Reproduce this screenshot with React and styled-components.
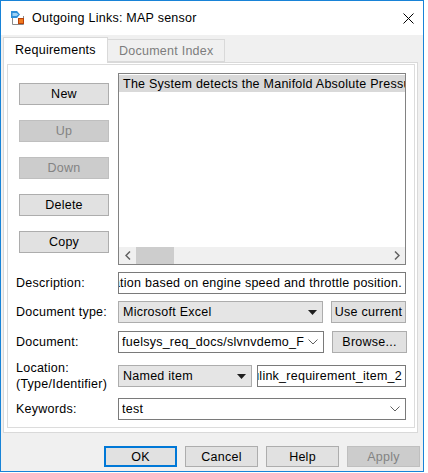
import styled, { createGlobalStyle } from 'styled-components'

const GlobalStyle = createGlobalStyle`
  body {
    margin: 0;
    background: #ffffff;
    font-family: "Liberation Sans", Arial, sans-serif;
    font-size: 12.5px;
    letter-spacing: 0.25px;
    color: #000;
  }
`

const Window = styled.div`
  width: 424px;
  box-sizing: border-box;
  border: 1px solid #1883d7;
  background: #f0f0f0;
  display: flex;
  flex-direction: column;
`

const TitleBar = styled.div`
  height: 34px;
  background: #ffffff;
  display: flex;
  align-items: center;
  padding-left: 10px;
  padding-right: 9px;
`

const TitleText = styled.span`
  margin-left: 7px;
`

const CloseBtn = styled.div`
  margin-left: auto;
  width: 11px;
  height: 11px;
  display: flex;
`

const Body = styled.div`
  padding: 2px 5px 0 2px;
`

const TabRow = styled.div`
  display: flex;
  align-items: flex-end;
  height: 26px;
  margin-bottom: -1px;
`

const Tab = styled.div`
  box-sizing: border-box;
  position: relative;
  z-index: ${p => (p.$active ? 1 : 0)};
  height: ${p => (p.$active ? '26px' : '23px')};
  margin-bottom: ${p => (p.$active ? '0' : '1px')};
  width: ${p => p.$w}px;
  border: 1px solid #d9d9d9;
  border-bottom: ${p => (p.$active ? 'none' : '1px solid #d9d9d9')};
  border-left: ${p => (p.$active ? '1px solid #d9d9d9' : 'none')};
  background: ${p => (p.$active ? '#ffffff' : '#f0f0f0')};
  color: ${p => (p.$active ? '#000' : '#7d7d7d')};
  padding-left: 11px;
  display: flex;
  align-items: center;
  white-space: nowrap;
  padding-bottom: ${p => (p.$active ? '2px' : '0')};
`

const Pane = styled.div`
  box-sizing: border-box;
  width: 415px;
  border: 1px solid #d9d9d9;
  background: #ffffff;
  padding: 1px 2px 4px 3px;
`

const Inner = styled.div`
  box-sizing: border-box;
  height: 364px;
  border: 1px solid #dcdcdc;
  padding: 8px 7px 0 0;
`

const Top = styled.div`
  display: flex;
`

const ButtonCol = styled.div`
  display: flex;
  flex-direction: column;
  gap: 15px;
  width: 90px;
  margin-left: 11px;
  padding-top: 10px;
`

const Btn = styled.div`
  box-sizing: border-box;
  width: ${p => (p.$w ? `${p.$w}px` : '100%')};
  height: ${p => p.$h || 22}px;
  border: ${p => (p.$default ? '2px solid #0078d7' : p.$disabled ? '1px solid #bfbfbf' : '1px solid #adadad')};
  background: ${p => (p.$disabled ? '#cccccc' : '#e1e1e1')};
  color: ${p => (p.$disabled ? '#838383' : '#000')};
  display: flex;
  align-items: center;
  justify-content: center;
  flex-shrink: 0;
  white-space: nowrap;
`

const List = styled.div`
  box-sizing: border-box;
  width: 288px;
  height: 192px;
  margin-left: 9px;
  border: 1px solid #828282;
  display: flex;
  flex-direction: column;
`

const ListBody = styled.div`
  flex: 1;
  padding-top: 1px;
  overflow: hidden;
`

const ListRow = styled.div`
  height: 17px;
  background: ${p => (p.$selected ? '#d9d9d9' : 'transparent')};
  padding-left: 4px;
  display: flex;
  align-items: center;
  white-space: nowrap;
  overflow: hidden;
`

const HScroll = styled.div`
  height: 17px;
  background: #f0f0f0;
  display: flex;
  align-items: center;
`

const ScrollArrow = styled.div`
  width: 17px;
  height: 17px;
  display: flex;
  align-items: center;
  justify-content: center;
  margin-left: ${p => (p.$end ? 'auto' : '0')};
`

const Thumb = styled.div`
  width: 38px;
  height: 17px;
  background: #cdcdcd;
`

const Form = styled.div`
  margin-top: 7px;
  display: flex;
  flex-direction: column;
`

const Row = styled.div`
  display: grid;
  grid-template-columns: 110px 288px;
  align-items: center;
  margin-top: ${p => p.$gap || 0}px;
`

const Label = styled.div`
  padding-left: 8px;
  line-height: 16px;
  white-space: nowrap;
`

const Controls = styled.div`
  display: flex;
  gap: ${p => p.$gap || 8}px;
`

const TextField = styled.div`
  box-sizing: border-box;
  width: ${p => (p.$w ? `${p.$w}px` : '100%')};
  height: 22px;
  border: 1px solid #7a7a7a;
  background: #ffffff;
  padding: 0 3px;
  display: flex;
  align-items: center;
  justify-content: ${p => (p.$end ? 'flex-end' : 'flex-start')};
  overflow: hidden;
  white-space: nowrap;
`

const FieldText = styled.span`
  flex-shrink: 0;
  white-space: nowrap;
`

const Select = styled.div`
  box-sizing: border-box;
  width: ${p => p.$w}px;
  height: 22px;
  border: 1px solid #adadad;
  background: #e5e5e5;
  display: flex;
  align-items: center;
  padding: 0 5px 0 4px;
`

const Combo = styled.div`
  box-sizing: border-box;
  width: ${p => (p.$w ? `${p.$w}px` : '100%')};
  height: 22px;
  border: 1px solid #7a7a7a;
  background: #ffffff;
  display: flex;
  align-items: center;
  gap: 4px;
  padding: 0 5px 0 3px;
`

const ComboText = styled.span`
  flex: 1;
  overflow: hidden;
  white-space: nowrap;
`

const Footer = styled.div`
  display: flex;
  justify-content: flex-end;
  gap: 8px;
  margin-top: 13px;
  padding: 0 3px 4px 0;
`

const Caret = () => (
  <svg width="9" height="5" viewBox="0 0 9 5" style={{ marginLeft: 'auto' }}>
    <path d="M0 0 L9 0 L4.5 5 Z" fill="#1e1e1e" />
  </svg>
)

const Chevron = () => (
  <svg width="10" height="6" viewBox="0 0 10 6">
    <path d="M0.5 0.5 L5 5 L9.5 0.5" fill="none" stroke="#606060" strokeWidth="1" />
  </svg>
)

const TitleIcon = () => (
  <svg width="14" height="14" viewBox="0 0 14 14">
    <path d="M1.5 3 V13.5 H12.5 V5" fill="none" stroke="#8a8a8a" strokeWidth="1" />
    <path d="M0 0 H6 L9 3.5 L6 7 H0 Z" fill="#2f8fd8" />
    <path d="M1.5 2 H5.5 L7.5 3.5 L5.5 5 H1.5 Z" fill="#9fd2f5" />
    <rect x="7.5" y="7.5" width="5" height="5" fill="#f07a1e" stroke="#b8420c" />
  </svg>
)

export default function App() {
  return (
    <>
      <GlobalStyle />
      <Window>
        <TitleBar>
          <TitleIcon />
          <TitleText>Outgoing Links: MAP sensor</TitleText>
          <CloseBtn>
            <svg width="11" height="11" viewBox="0 0 11 11">
              <path d="M0.5 0.5 L10.5 10.5 M10.5 0.5 L0.5 10.5" stroke="#000" strokeWidth="1" />
            </svg>
          </CloseBtn>
        </TitleBar>
        <Body>
          <TabRow>
            <Tab $active $w={105}>Requirements</Tab>
            <Tab $w={117}>Document Index</Tab>
          </TabRow>
          <Pane>
            <Inner>
              <Top>
                <ButtonCol>
                  <Btn>New</Btn>
                  <Btn $disabled>Up</Btn>
                  <Btn $disabled>Down</Btn>
                  <Btn>Delete</Btn>
                  <Btn>Copy</Btn>
                </ButtonCol>
                <List>
                  <ListBody>
                    <ListRow $selected>The System detects the Manifold Absolute Pressure (MAP) sensor failure</ListRow>
                  </ListBody>
                  <HScroll>
                    <ScrollArrow>
                      <svg width="6" height="9" viewBox="0 0 6 9">
                        <path d="M5 0.5 L1 4.5 L5 8.5" fill="none" stroke="#606060" strokeWidth="1.5" />
                      </svg>
                    </ScrollArrow>
                    <Thumb />
                    <ScrollArrow $end>
                      <svg width="6" height="9" viewBox="0 0 6 9">
                        <path d="M1 0.5 L5 4.5 L1 8.5" fill="none" stroke="#606060" strokeWidth="1.5" />
                      </svg>
                    </ScrollArrow>
                  </HScroll>
                </List>
              </Top>
              <Form>
                <Row>
                  <Label>Description:</Label>
                  <TextField $end>
                    <FieldText>manifold pressure computation based on engine speed and throttle position.</FieldText>
                  </TextField>
                </Row>
                <Row $gap={7}>
                  <Label>Document type:</Label>
                  <Controls>
                    <Select $w={206}>
                      Microsoft Excel
                      <Caret />
                    </Select>
                    <Btn $w={75}>Use current</Btn>
                  </Controls>
                </Row>
                <Row $gap={8}>
                  <Label>Document:</Label>
                  <Controls>
                    <Combo $w={206}>
                      <ComboText>fuelsys_req_docs/slvnvdemo_FuelsysRequirements.xlsx</ComboText>
                      <Chevron />
                    </Combo>
                    <Btn $w={75}>Browse...</Btn>
                  </Controls>
                </Row>
                <Row $gap={7}>
                  <Label>
                    Location:
                    <br />
                    (Type/Identifier)
                  </Label>
                  <Controls $gap={5}>
                    <Select $w={134}>
                      Named item
                      <Caret />
                    </Select>
                    <TextField $w={149} $end>
                      <FieldText>simulink_requirement_item_2</FieldText>
                    </TextField>
                  </Controls>
                </Row>
                <Row $gap={6}>
                  <Label>Keywords:</Label>
                  <Combo>
                    <ComboText>test</ComboText>
                    <Chevron />
                  </Combo>
                </Row>
              </Form>
            </Inner>
          </Pane>
        </Body>
        <Footer>
          <Btn $default $w={73} $h={21}>OK</Btn>
          <Btn $w={73} $h={21}>Cancel</Btn>
          <Btn $w={73} $h={21}>Help</Btn>
          <Btn $disabled $w={73} $h={21}>Apply</Btn>
        </Footer>
      </Window>
    </>
  )
}
